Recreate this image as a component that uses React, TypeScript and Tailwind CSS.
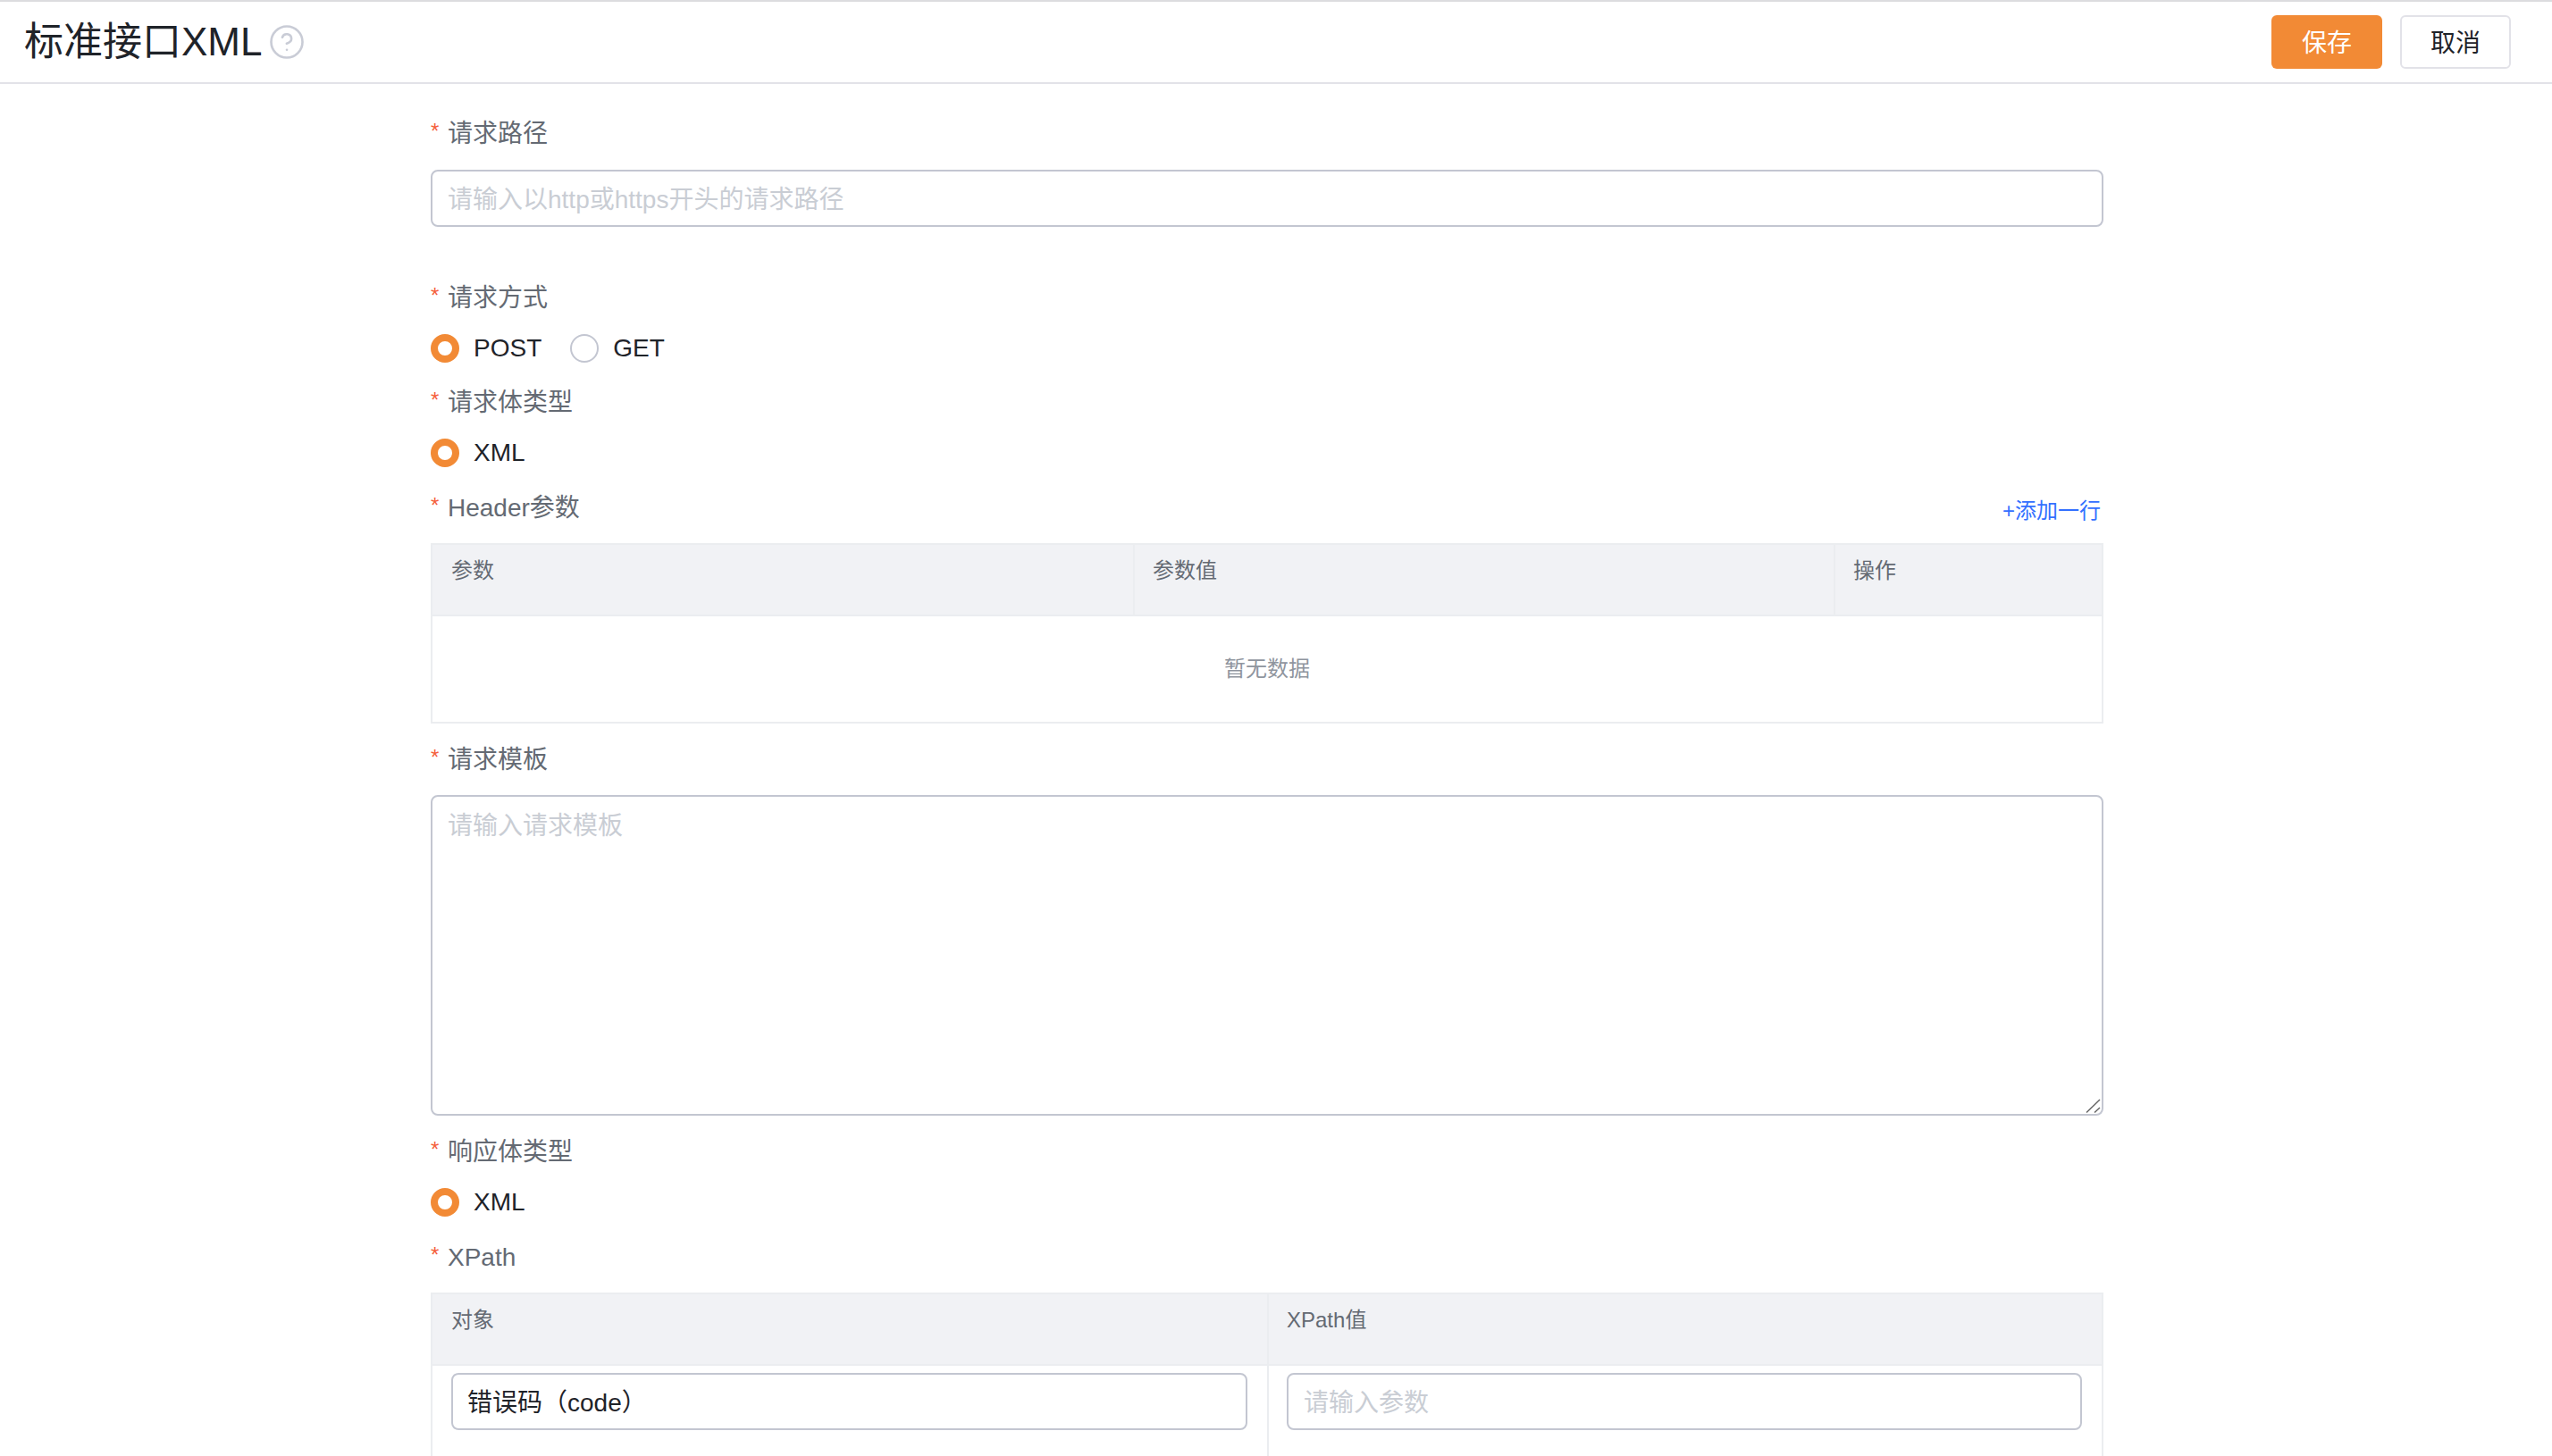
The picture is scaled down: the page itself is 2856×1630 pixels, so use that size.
import { CircleHelp } from 'lucide-react'

const font = 'font-["Liberation_Sans","Noto_Sans_CJK_SC",sans-serif]'

function Label({ text, className }: { text: string; className: string }) {
  return (
    <div className={`flex h-10 items-center pt-1 text-[28px] leading-9 text-[#646a73] ${className}`}>
      <span className="relative -top-[3px] w-[19px] text-[24px] text-[#f5603c]">*</span>
      <span>{text}</span>
    </div>
  )
}

function Radio({ text, checked }: { text: string; checked?: boolean }) {
  return (
    <div className="flex h-10 items-center gap-4 text-[28px] text-[#1f2329]">
      {checked ? (
        <span className="h-8 w-8 rounded-full border-[8px] border-[#f28a35] bg-white" />
      ) : (
        <span className="h-8 w-8 rounded-full border-2 border-[#c3c6d1] bg-white" />
      )}
      <span>{text}</span>
    </div>
  )
}

function TextInput({ placeholder, value, className }: { placeholder: string; value?: string; className: string }) {
  return (
    <input
      readOnly
      placeholder={placeholder}
      value={value}
      className={`h-[64px] rounded-lg border-2 border-[#c3c6d1] bg-white text-[28px] text-[#1f2329] outline-none placeholder:text-[#c9cdd4] ${className}`}
    />
  )
}

export default function App() {
  return (
    <div className={`h-[1630px] overflow-hidden bg-white ${font}`}>
      <header className="flex h-[94px] items-center justify-between border-t-2 border-b-2 border-t-[#dcdcdf] border-b-[#e2e2e8] pr-[46px] pl-[27px]">
        <div className="flex items-center gap-[7px]">
          <h1 className="text-[44px] leading-[60px] font-normal text-[#1f2329]">标准接口XML</h1>
          <CircleHelp size={42} strokeWidth={1.5} className="text-[#c9ccd6]" />
        </div>
        <div className="flex gap-5">
          <button className="h-[60px] w-[124px] rounded-md bg-[#f28a35] pt-1 text-[28px] text-white">保存</button>
          <button className="h-[60px] w-[124px] rounded-md border-2 border-[#e2e2e8] bg-white pt-1 text-[28px] text-[#1f2329]">取消</button>
        </div>
      </header>

      <main className="ml-[482px] w-[1872px]">
        <Label text="请求路径" className="mt-[34px]" />
        <TextInput placeholder="请输入以http或https开头的请求路径" className="mt-[22px] w-full px-[17px] pt-[3px]" />

        <Label text="请求方式" className="mt-[58px]" />
        <div className="mt-[18px] flex gap-8">
          <Radio text="POST" checked />
          <Radio text="GET" />
        </div>

        <Label text="请求体类型" className="mt-[19px]" />
        <div className="mt-[18px]">
          <Radio text="XML" checked />
        </div>

        <div className="mt-5 flex items-center justify-between">
          <Label text="Header参数" className="" />
          <span className="h-10 pt-[9px] pr-[3px] text-[24px] leading-8 text-[#3370ff]">+添加一行</span>
        </div>

        <div className="mt-[21px] border-2 border-[#ebedf0]">
          <div className="grid h-[80px] grid-cols-[786px_784px_1fr] border-b-2 border-[#ebedf0] bg-[#f1f2f5] text-[24px] leading-8 text-[#646a73]">
            <div className="border-r-2 border-[#ebedf0] pt-[13px] pl-[21px]">参数</div>
            <div className="border-r-2 border-[#ebedf0] pt-[13px] pl-5">参数值</div>
            <div className="pt-[13px] pl-5">操作</div>
          </div>
          <div className="flex h-[118px] items-center justify-center text-[24px] text-[#8f959e]">暂无数据</div>
        </div>

        <Label text="请求模板" className="mt-[19px]" />
        <div className="relative mt-[21px] h-[359px]">
          <textarea
            readOnly
            placeholder="请输入请求模板"
            className="block h-full w-full resize-none rounded-lg border-2 border-[#c3c6d1] bg-white px-[17px] py-[13px] text-[28px] leading-10 outline-none placeholder:text-[#c9cdd4]"
          />
          <svg className="absolute right-[2px] bottom-[2px]" width="18" height="18" viewBox="0 0 18 18" fill="none" stroke="#666" strokeWidth="1.5">
            <path d="M1 16.5 16 2" />
            <path d="M10 16.5 16 11" />
          </svg>
        </div>

        <Label text="响应体类型" className="mt-[19px]" />
        <div className="mt-[18px]">
          <Radio text="XML" checked />
        </div>

        <Label text="XPath" className="mt-5" />

        <div className="mt-[21px] border-2 border-[#ebedf0]">
          <div className="grid h-[80px] grid-cols-[936px_1fr] border-b-2 border-[#ebedf0] bg-[#f1f2f5] text-[24px] leading-8 text-[#646a73]">
            <div className="border-r-2 border-[#ebedf0] pt-[13px] pl-[21px]">对象</div>
            <div className="pt-[13px] pl-5">XPath值</div>
          </div>
          <div className="grid h-[140px] grid-cols-[936px_1fr]">
            <div className="border-r-2 border-[#ebedf0] pt-2 pl-[21px]">
              <TextInput placeholder="" value="错误码（code）" className="w-[891px] px-4 pb-[2px]" />
            </div>
            <div className="pt-2 pl-5">
              <TextInput placeholder="请输入参数" className="w-[890px] px-[17px] pt-[3px]" />
            </div>
          </div>
        </div>
      </main>
    </div>
  )
}
